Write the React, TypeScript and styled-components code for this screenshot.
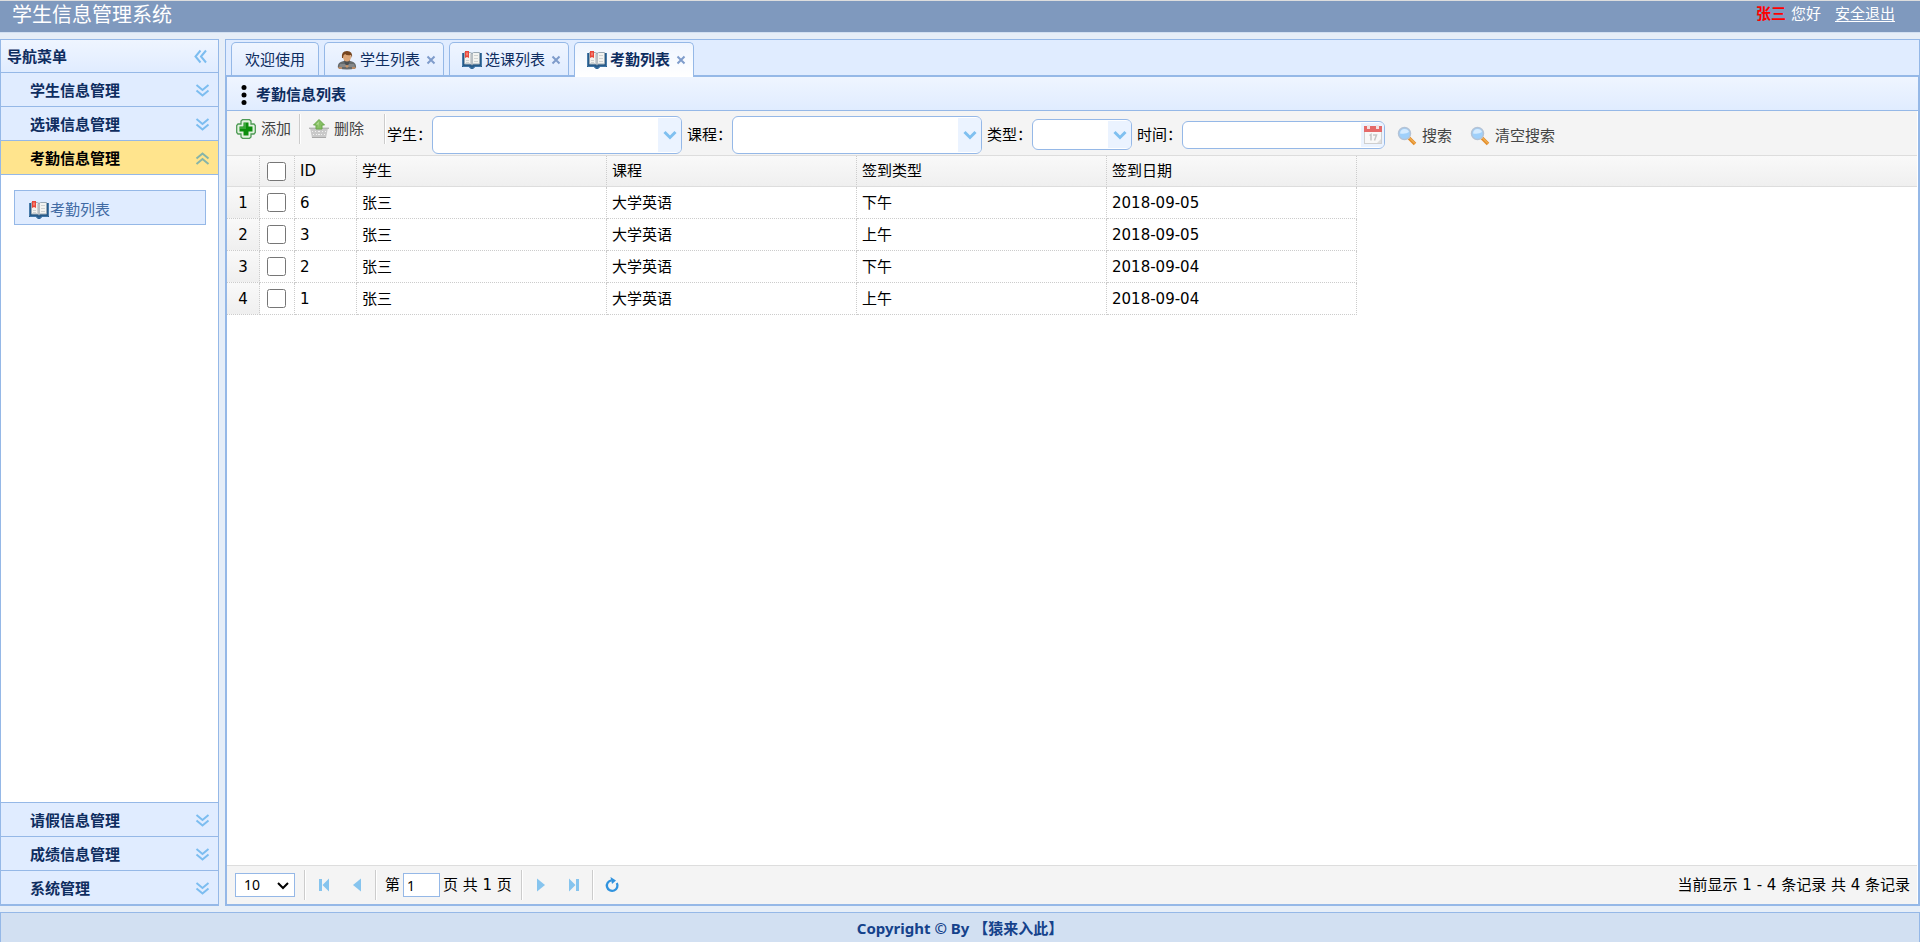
import React from "react";
import styled, { createGlobalStyle } from "styled-components";

const LINE = "#95b8e7";
const UI_FONT = '"DejaVu Sans", "Noto Sans CJK SC", sans-serif';

const GlobalStyle = createGlobalStyle`
  *, *::before, *::after { box-sizing: border-box; }
  body { margin: 0; background: #e6eef8; }
  button, input, select { font: inherit; color: inherit; }
`;

/* ---------- page frame ---------- */

const Page = styled.div`
  display: flex;
  flex-direction: column;
  min-height: 100vh;
  font: 15px/20px ${UI_FONT};
  color: #000;
`;

const TopBar = styled.header`
  display: flex;
  justify-content: space-between;
  height: 33px;
  padding: 2px 25px 0 12px;
  border-top: 1px solid #ddd;
  border-bottom: 1px solid #d2e0f2;
  background: #7f99be;
  color: #fff;
`;

const SystemTitle = styled.h1`
  margin: 0;
  font-size: 20px;
  font-weight: 400;
  line-height: 24px;
`;

const UserInfo = styled.div`
  display: flex;
  line-height: 22px;
`;

const UserName = styled.b`
  margin-right: 5px;
  color: #f00;
`;

const LogoutLink = styled.a`
  margin-left: 14px;
  color: #fff;
  text-underline-offset: 2px;
`;

const Workspace = styled.div`
  display: flex;
  flex: 1;
  gap: 6px;
  padding: 6px 0;
`;

const Footer = styled.footer`
  height: 30px;
  border: 1px solid ${LINE};
  border-bottom: 0;
  background: #d2e0f2;
  color: #15428b;
  font: bold 15px/31px "Noto Sans", "Noto Sans CJK SC", sans-serif;
  text-align: center;
`;

/* ---------- navigation ---------- */

const Sidebar = styled.nav`
  display: flex;
  flex-direction: column;
  width: 219px;
  flex-shrink: 0;
  border: 1px solid ${LINE};
  border-bottom-width: 2px;
  background: #fff;
`;

const SidebarHead = styled.div`
  display: flex;
  align-items: center;
  justify-content: space-between;
  height: 33px;
  padding: 1px 10px 0 6px;
  border-bottom: 1px solid ${LINE};
  background: linear-gradient(#eff5ff, #e0ecff);
  color: #0e2d5f;
  font-weight: 700;
`;

const IconButton = styled.button`
  display: flex;
  padding: 0;
  border: 0;
  background: none;
  cursor: pointer;
`;

const GroupButton = styled.button<{ $active?: boolean; $below?: boolean }>`
  display: flex;
  align-items: center;
  justify-content: space-between;
  height: 34px;
  padding: 2px 8px 0 29px;
  border: 0 solid ${LINE};
  border-width: ${(p) => (p.$below ? "1px 0 0" : "0 0 1px")};
  background: ${(p) => (p.$active ? "#ffe48d" : "#e0ecff")};
  color: ${(p) => (p.$active ? "#000" : "#0e2d5f")};
  font-weight: 700;
  cursor: pointer;
`;

const GroupBody = styled.div`
  flex: 1;
  padding: 15px 12px 15px 13px;
`;

const MenuLink = styled.a`
  display: flex;
  align-items: center;
  height: 35px;
  gap: 1px;
  padding: 4px 0 0 14px;
  border: 1px solid ${LINE};
  background: #e0ecff;
  color: #416aa3;
  text-decoration: none;
`;

/* ---------- tabs ---------- */

const Main = styled.main`
  display: flex;
  flex: 1;
  flex-direction: column;
  min-width: 0;
`;

const TabStrip = styled.div`
  display: flex;
  gap: 5px;
  height: 36px;
  padding: 2px 5px 0;
  border: 1px solid ${LINE};
  border-bottom: 0;
  background: #e0ecff;
`;

const Tab = styled.div<{ $active?: boolean }>`
  display: flex;
  align-items: center;
  position: relative;
  height: ${(p) => (p.$active ? 35 : 33)}px;
  padding: ${(p) => (p.$active ? "0 7px 1px 12px" : "1px 7px 0 12px")};
  border: 1px solid ${LINE};
  border-bottom: 0;
  border-radius: 5px 5px 0 0;
  background: ${(p) => (p.$active ? "linear-gradient(#eff5ff, #fff)" : "linear-gradient(#eff5ff, #e0ecff)")};
  color: #0e2d5f;
  font-weight: ${(p) => (p.$active ? 700 : 400)};
`;

const TabLabel = styled.button<{ $plain?: boolean }>`
  display: flex;
  align-items: center;
  gap: 3px;
  padding: 0 ${(p) => (p.$plain ? 6 : 0)}px 0 ${(p) => (p.$plain ? 1 : 0)}px;
  border: 0;
  background: none;
  white-space: nowrap;
  cursor: pointer;
`;

const TabClose = styled(IconButton)`
  margin-left: 6px;
`;

const Panel = styled.section`
  display: flex;
  flex: 1;
  flex-direction: column;
  border: 2px solid ${LINE};
  background: #fff;
`;

const PanelTitle = styled.h2`
  display: flex;
  align-items: center;
  gap: 9px;
  height: 34px;
  margin: 0;
  padding: 2px 0 0 14px;
  border-bottom: 1px solid ${LINE};
  background: linear-gradient(#eff5ff, #e0ecff);
  color: #0e2d5f;
  font-size: 15px;
`;

/* ---------- toolbar ---------- */

const Toolbar = styled.div`
  display: flex;
  align-items: center;
  height: 45px;
  margin-right: 1px;
  padding: 3px 0 0 9px;
  border-bottom: 1px solid #ddd;
  background: #f4f4f4;
`;

const Actions = styled.div`
  display: flex;
  align-self: flex-start;
  align-items: center;
  gap: 8px;
  height: 30px;
`;

const Divider = styled.span`
  width: 2px;
  height: 30px;
  border-left: 1px solid #ccc;
  border-right: 1px solid #fff;
`;

const ToolButton = styled.button`
  display: flex;
  align-items: center;
  gap: 5px;
  padding: 0;
  border: 0;
  background: none;
  color: #444;
  white-space: nowrap;
  cursor: pointer;
`;

const DeleteButton = styled(ToolButton)`
  margin-right: 12px;
`;

const Filters = styled.form`
  display: flex;
  align-items: center;
  margin-left: 1px;
`;

const Field = styled.label`
  display: flex;
  align-items: center;
  margin-right: 5px;
  white-space: nowrap;
`;

const FieldBox = styled.span<{ $w: number; $h: number }>`
  display: flex;
  position: relative;
  width: ${(p) => p.$w}px;
  height: ${(p) => p.$h}px;
  padding: 1px;
  overflow: hidden;
  border: 1px solid ${LINE};
  border-radius: 6px;
  background: #fff;

  select, input {
    width: 100%;
    padding: 0 24px 0 6px;
    border: 0;
    outline: 0;
    background: none;
    appearance: none;
  }
`;

const FieldAddon = styled.span`
  display: flex;
  position: absolute;
  top: 1px;
  right: 0;
  bottom: 1px;
  align-items: center;
  justify-content: center;
  width: 23px;
  background: #ebf3ff;
  pointer-events: none;
`;

const SearchButtons = styled.div`
  display: flex;
  gap: 18px;
  margin-left: 7px;
  padding-top: 2px;
`;

/* ---------- grid ---------- */

const GridArea = styled.div`
  flex: 1;
  margin-right: 1px;
`;

const Grid = styled.table`
  width: 100%;
  border-spacing: 0;
  table-layout: fixed;

  th, td {
    height: 32px;
    padding: 0 5px;
    font-weight: 400;
    text-align: left;
    overflow: hidden;
    white-space: nowrap;
  }
  th, tbody td:not(:last-child), tbody th {
    border-right: 1px dotted #ccc;
  }
  tbody td:not(:last-child), tbody th {
    border-bottom: 1px dotted #ccc;
  }
  thead th, thead td {
    height: 31px;
    border-bottom: 1px solid #ddd;
  }
  thead tr, tbody th {
    background: linear-gradient(#f9f9f9, #efefef);
  }
  tbody th {
    text-align: center;
  }
`;

const Col = styled.col<{ $w?: number }>`
  width: ${(p) => (p.$w ? `${p.$w}px` : "auto")};
`;

const RowCheck = styled.input`
  display: block;
  width: 19px;
  height: 19px;
  margin: 0 2px;
`;

/* ---------- pager ---------- */

const Pager = styled.div`
  display: flex;
  align-items: center;
  height: 39px;
  margin-right: 1px;
  padding: 0 7px 0 8px;
  border-top: 1px solid #ddd;
  background: #f4f4f4;
`;

const SizeBox = styled.span`
  display: flex;
  position: relative;
  width: 60px;
  height: 24px;
  margin-right: 9px;
  border: 1px solid ${LINE};
  background: #fff;
  font: 14px/20px "Noto Sans", sans-serif;

  select {
    width: 100%;
    padding: 0 8px;
    border: 0;
    background: none;
    appearance: none;
  }
  svg {
    position: absolute;
    top: 8px;
    right: 5px;
    pointer-events: none;
  }
`;

const PagerButtons = styled.div`
  display: flex;
  gap: 11px;
  padding: 0 7px;
`;

const PagerButton = styled(IconButton)`
  align-items: center;
  justify-content: center;
  width: 22px;
  height: 22px;
`;

const PageJump = styled.label`
  display: flex;
  align-items: center;
  gap: 3px;
  margin: 0 9px 0 8px;
  white-space: pre;
`;

const PageInput = styled.input`
  width: 37px;
  height: 24px;
  padding: 0 3px;
  border: 1px solid ${LINE};
  background: #fff;
  font: 14px/20px "Noto Sans", sans-serif;
`;

const PagerInfo = styled.div`
  margin-left: auto;
`;

/* ---------- icons ---------- */

const DoubleChevron = ({ dir }: { dir: "down" | "up" | "left" }) => {
  const turn = { down: 0, up: 180, left: 90 }[dir];
  const stroke = dir === "up" ? "#86b4a8" : "#7cbdf0";
  return (
    <svg width="15" height="15" viewBox="0 0 15 15" aria-hidden="true">
      <g fill="none" stroke={stroke} strokeWidth="2" transform={`rotate(${turn} 7.5 7.5)`}>
        <path d="M1.500 2 7.500 7l6-5M1.500 7.500 7.500 12.500l6-5" />
      </g>
    </svg>
  );
};

const BookIcon = () => (
  <svg width="20" height="18" viewBox="0 0 20 18" aria-hidden="true">
    <path d="M0 2h20v14h-7l-2 2H9l-2-2H0z" fill="#275a89" />
    <path d="M0 2h1v13H0zM19 2h1v13h-1z" fill="#4a7dab" />
    <path d="M2.500 1.500h6l1.500 1 1.500-1h6v11.500h-6l-1.500 1-1.500-1h-6z" fill="#f3f3f0" stroke="#9aa9b5" />
    <path d="M10 2.500v11" stroke="#7f8c98" />
    <path d="M8 2.500h1v10H8z" fill="#cfd2d4" />
    <path d="M12 4.500h4M12 7.500h4M12 10.500h4M4 9.500h3M4 11.500h3" stroke="#cfd2d2" />
    <path d="M3 0h4v7L5 6 3 7z" fill="#e8483a" />
    <path d="M5 1.500v3" stroke="#ffaea5" />
    <path d="M1 15.500h6l2 1.500h2l2-1.500h6" fill="none" stroke="#3f76a8" />
  </svg>
);

const StudentIcon = () => (
  <svg width="20" height="20" viewBox="0 0 20 20" aria-hidden="true">
    <path d="M1 18q-1-5 4-6.500l5-1.500 5 1.500q4.500 1.500 4 6.500-9 3-18 0z" fill="#666a6c" />
    <path d="M3 14h14l1 3H2z" fill="#85888a" />
    <path d="M7 10h6l-1 4-2 2-2-2z" fill="#4b4f52" />
    <ellipse cx="10" cy="7" rx="4" ry="4.500" fill="#dca577" />
    <path d="M5 8Q4 1 10 1t5 7l-1-3q-4 1-6-1-2 1-2 4z" fill="#76451f" />
    <path d="M8 16q2-2 4 0l-2 2z" fill="#c99469" />
    <path d="M1 17h4v2H2zM15 17h4l-1 2h-3z" fill="#b98a66" />
  </svg>
);

const CloseIcon = () => (
  <svg width="10" height="10" viewBox="0 0 10 10" aria-hidden="true">
    <path d="M1.500 1.500l7 7m0-7l-7 7" stroke="#7f9ccb" strokeWidth="2" />
  </svg>
);

const DotsIcon = () => (
  <svg width="6" height="20" viewBox="0 0 6 20" aria-hidden="true">
    <circle cx="3" cy="2.5" r="2.5" />
    <circle cx="3" cy="10" r="2.5" />
    <circle cx="3" cy="17.5" r="2.5" />
  </svg>
);

const AddIcon = () => (
  <svg width="20" height="20" viewBox="0 0 20 20" aria-hidden="true">
    <path d="M6.500 .7h7L15 2v3h3l1.300 1.500v7L18 15h-3v3l-1.500 1.300h-7L5 18v-3H2L.7 13.500v-7L2 5h3V2z" fill="#e2f1df" stroke="#4f9a55" strokeWidth="1.300" />
    <path d="M7.500 3.500h5v4h4v5h-4v4h-5v-4h-4v-5h4z" fill="#0c8d0c" />
    <path d="M4 8h4V4h2v6H4z" fill="#3aa63a" />
  </svg>
);

const DeleteIcon = () => (
  <svg width="20" height="20" viewBox="0 0 20 20" aria-hidden="true">
    <path d="M1 9h18l-2 10H3z" fill="#c9c9c9" />
    <path d="M3 12h1v1H3zM6 12h1v1H6zM9 12h2v1H9zM13 12h1v1h-1zM16 12h1v1h-1zM4 15h1v1H4zM7 15h1v1H7zM9 15h2v1H9zM12 15h1v1h-1zM15 15h1v1h-1z" fill="#f1f1f1" />
    <path d="M3 18h14v1H3z" fill="#a8a8a8" />
    <path d="M0 8h20v2H0z" fill="#d9d9d9" />
    <path d="M0 9.500h20" stroke="#b5b5b5" />
    <path d="M10 .5 15.500 6H13v4H7V6H4.500z" fill="#86c063" stroke="#6aa74c" />
    <path d="M10 2.500 7 5.500h2v3z" fill="#b5dd98" />
  </svg>
);

const SearchIcon = () => (
  <svg width="20" height="20" viewBox="0 0 20 20" aria-hidden="true">
    <path d="M12 12l6 6" stroke="#e38e2c" strokeWidth="3.500" />
    <path d="M12.500 12 18 17.500" stroke="#f9c56c" />
    <circle cx="7.500" cy="7.500" r="6" fill="#9fd0fb" stroke="#b4c3d6" strokeWidth="1.500" />
    <path d="M3 7.500q.5-4.500 4.500-4.500 3.500 0 4.500 3-3 2.500-9 1.500z" fill="#d5ebff" />
  </svg>
);

const CalendarIcon = () => (
  <svg width="18" height="20" viewBox="0 0 18 20" aria-hidden="true">
    <path d="M0 2h18v17H0z" fill="#cfcfcf" />
    <path d="M1 7h16v11H1z" fill="#f8f8f8" />
    <path d="M0 1h18v6H0z" fill="#e56a69" />
    <path d="M3 0h3v4H3zM12 0h3v4h-3z" fill="#f3e2e2" />
    <path d="M5.500 10.500l1.500-1v6M9 10h3.500L10.500 15.500" fill="none" stroke="#c6c6c6" strokeWidth="1.500" />
    <path d="M13 18l4-4v4z" fill="#dedede" />
  </svg>
);

const ArrowIcon = () => (
  <svg width="14" height="10" viewBox="0 0 14 10" aria-hidden="true">
    <path d="M1.500 2 7 7.500 12.500 2" fill="none" stroke="#7fc0f0" strokeWidth="3" />
  </svg>
);

const SizeArrow = () => (
  <svg width="12" height="8" viewBox="0 0 12 8" aria-hidden="true">
    <path d="M1 1l5 5 5-5" fill="none" stroke="#000" strokeWidth="2" />
  </svg>
);

const PageIcon = ({ kind }: { kind: "first" | "prev" | "next" | "last" }) => (
  <svg width="14" height="14" viewBox="0 0 14 14" fill="#86c4ee" aria-hidden="true">
    {kind === "first" && <path d="M2 1h3v12H2zM12 .5v13L5.500 7z" />}
    {kind === "prev" && <path d="M11 .5v13L3 7z" />}
    {kind === "next" && <path d="M3 .5v13L11 7z" />}
    {kind === "last" && <path d="M9 1h3v12H9zM2 .5v13L8.500 7z" />}
  </svg>
);

const RefreshIcon = () => (
  <svg width="16" height="16" viewBox="0 0 16 16" aria-hidden="true">
    <path d="M12.800 6A5.300 5.300 0 1 1 7.500 3.300" fill="none" stroke="#3193de" strokeWidth="2.300" />
    <path d="M6.500 0 12 3.500 8 7z" fill="#3193de" />
  </svg>
);

/* ---------- data ---------- */

const groupsAbove = ["学生信息管理", "选课信息管理"];
const groupsBelow = ["请假信息管理", "成绩信息管理", "系统管理"];

const tabs = [
  { label: "欢迎使用", icon: null, active: false },
  { label: "学生列表", icon: <StudentIcon />, active: false },
  { label: "选课列表", icon: <BookIcon />, active: false },
  { label: "考勤列表", icon: <BookIcon />, active: true },
];

const records = [
  { id: 6, student: "张三", course: "大学英语", type: "下午", date: "2018-09-05" },
  { id: 3, student: "张三", course: "大学英语", type: "上午", date: "2018-09-05" },
  { id: 2, student: "张三", course: "大学英语", type: "下午", date: "2018-09-04" },
  { id: 1, student: "张三", course: "大学英语", type: "上午", date: "2018-09-04" },
];

const Combo = ({ label, w, h }: { label: string; w: number; h: number }) => (
  <Field>
    {label}
    <FieldBox $w={w} $h={h}>
      <select>
        <option />
      </select>
      <FieldAddon>
        <ArrowIcon />
      </FieldAddon>
    </FieldBox>
  </Field>
);

export default function App() {
  return (
    <Page>
      <GlobalStyle />
      <TopBar>
        <SystemTitle>学生信息管理系统</SystemTitle>
        <UserInfo>
          <UserName>张三</UserName>
          <span>您好</span>
          <LogoutLink href="#logout">安全退出</LogoutLink>
        </UserInfo>
      </TopBar>

      <Workspace>
        <Sidebar>
          <SidebarHead>
            导航菜单
            <IconButton type="button" aria-label="收起">
              <DoubleChevron dir="left" />
            </IconButton>
          </SidebarHead>
          {groupsAbove.map((name) => (
            <GroupButton key={name} type="button">
              {name}
              <DoubleChevron dir="down" />
            </GroupButton>
          ))}
          <GroupButton type="button" $active aria-expanded="true">
            考勤信息管理
            <DoubleChevron dir="up" />
          </GroupButton>
          <GroupBody>
            <MenuLink href="#attendance">
              <BookIcon />
              考勤列表
            </MenuLink>
          </GroupBody>
          {groupsBelow.map((name) => (
            <GroupButton key={name} type="button" $below>
              {name}
              <DoubleChevron dir="down" />
            </GroupButton>
          ))}
        </Sidebar>

        <Main>
          <TabStrip>
            {tabs.map((tab) => (
              <Tab key={tab.label} $active={tab.active}>
                <TabLabel type="button" $plain={!tab.icon}>
                  {tab.icon}
                  {tab.label}
                </TabLabel>
                {tab.icon && (
                  <TabClose type="button" aria-label={`关闭${tab.label}`}>
                    <CloseIcon />
                  </TabClose>
                )}
              </Tab>
            ))}
          </TabStrip>

          <Panel>
            <PanelTitle>
              <DotsIcon />
              考勤信息列表
            </PanelTitle>

            <Toolbar>
              <Actions>
                <ToolButton type="button">
                  <AddIcon />
                  添加
                </ToolButton>
                <Divider />
                <DeleteButton type="button">
                  <DeleteIcon />
                  删除
                </DeleteButton>
                <Divider />
              </Actions>
              <Filters>
                <Combo label="学生：" w={250} h={38} />
                <Combo label="课程：" w={250} h={38} />
                <Combo label="类型：" w={100} h={31} />
                <Field>
                  时间：
                  <FieldBox $w={203} $h={28}>
                    <input type="text" />
                    <FieldAddon>
                      <CalendarIcon />
                    </FieldAddon>
                  </FieldBox>
                </Field>
                <SearchButtons>
                  <ToolButton type="button">
                    <SearchIcon />
                    搜索
                  </ToolButton>
                  <ToolButton type="button">
                    <SearchIcon />
                    清空搜索
                  </ToolButton>
                </SearchButtons>
              </Filters>
            </Toolbar>

            <GridArea>
              <Grid>
                <colgroup>
                  <Col $w={33} />
                  <Col $w={35} />
                  <Col $w={62} />
                  <Col $w={250} />
                  <Col $w={250} />
                  <Col $w={250} />
                  <Col $w={250} />
                  <Col />
                </colgroup>
                <thead>
                  <tr>
                    <th />
                    <th>
                      <RowCheck type="checkbox" aria-label="全选" />
                    </th>
                    <th>ID</th>
                    <th>学生</th>
                    <th>课程</th>
                    <th>签到类型</th>
                    <th>签到日期</th>
                    <td />
                  </tr>
                </thead>
                <tbody>
                  {records.map((r, i) => (
                    <tr key={r.id}>
                      <th scope="row">{i + 1}</th>
                      <td>
                        <RowCheck type="checkbox" aria-label={`选择 ${r.id}`} />
                      </td>
                      <td>{r.id}</td>
                      <td>{r.student}</td>
                      <td>{r.course}</td>
                      <td>{r.type}</td>
                      <td>{r.date}</td>
                      <td />
                    </tr>
                  ))}
                </tbody>
              </Grid>
            </GridArea>

            <Pager>
              <SizeBox>
                <select aria-label="每页条数" defaultValue="10">
                  <option>10</option>
                  <option>20</option>
                  <option>50</option>
                </select>
                <SizeArrow />
              </SizeBox>
              <Divider />
              <PagerButtons>
                <PagerButton type="button" aria-label="首页">
                  <PageIcon kind="first" />
                </PagerButton>
                <PagerButton type="button" aria-label="上一页">
                  <PageIcon kind="prev" />
                </PagerButton>
              </PagerButtons>
              <Divider />
              <PageJump>
                第
                <PageInput type="text" defaultValue="1" />
                页 共 1 页
              </PageJump>
              <Divider />
              <PagerButtons>
                <PagerButton type="button" aria-label="下一页">
                  <PageIcon kind="next" />
                </PagerButton>
                <PagerButton type="button" aria-label="末页">
                  <PageIcon kind="last" />
                </PagerButton>
              </PagerButtons>
              <Divider />
              <PagerButtons>
                <PagerButton type="button" aria-label="刷新">
                  <RefreshIcon />
                </PagerButton>
              </PagerButtons>
              <PagerInfo>当前显示 1 - 4 条记录 共 4 条记录</PagerInfo>
            </Pager>
          </Panel>
        </Main>
      </Workspace>

      <Footer>Copyright © By 【猿来入此】</Footer>
    </Page>
  );
}
